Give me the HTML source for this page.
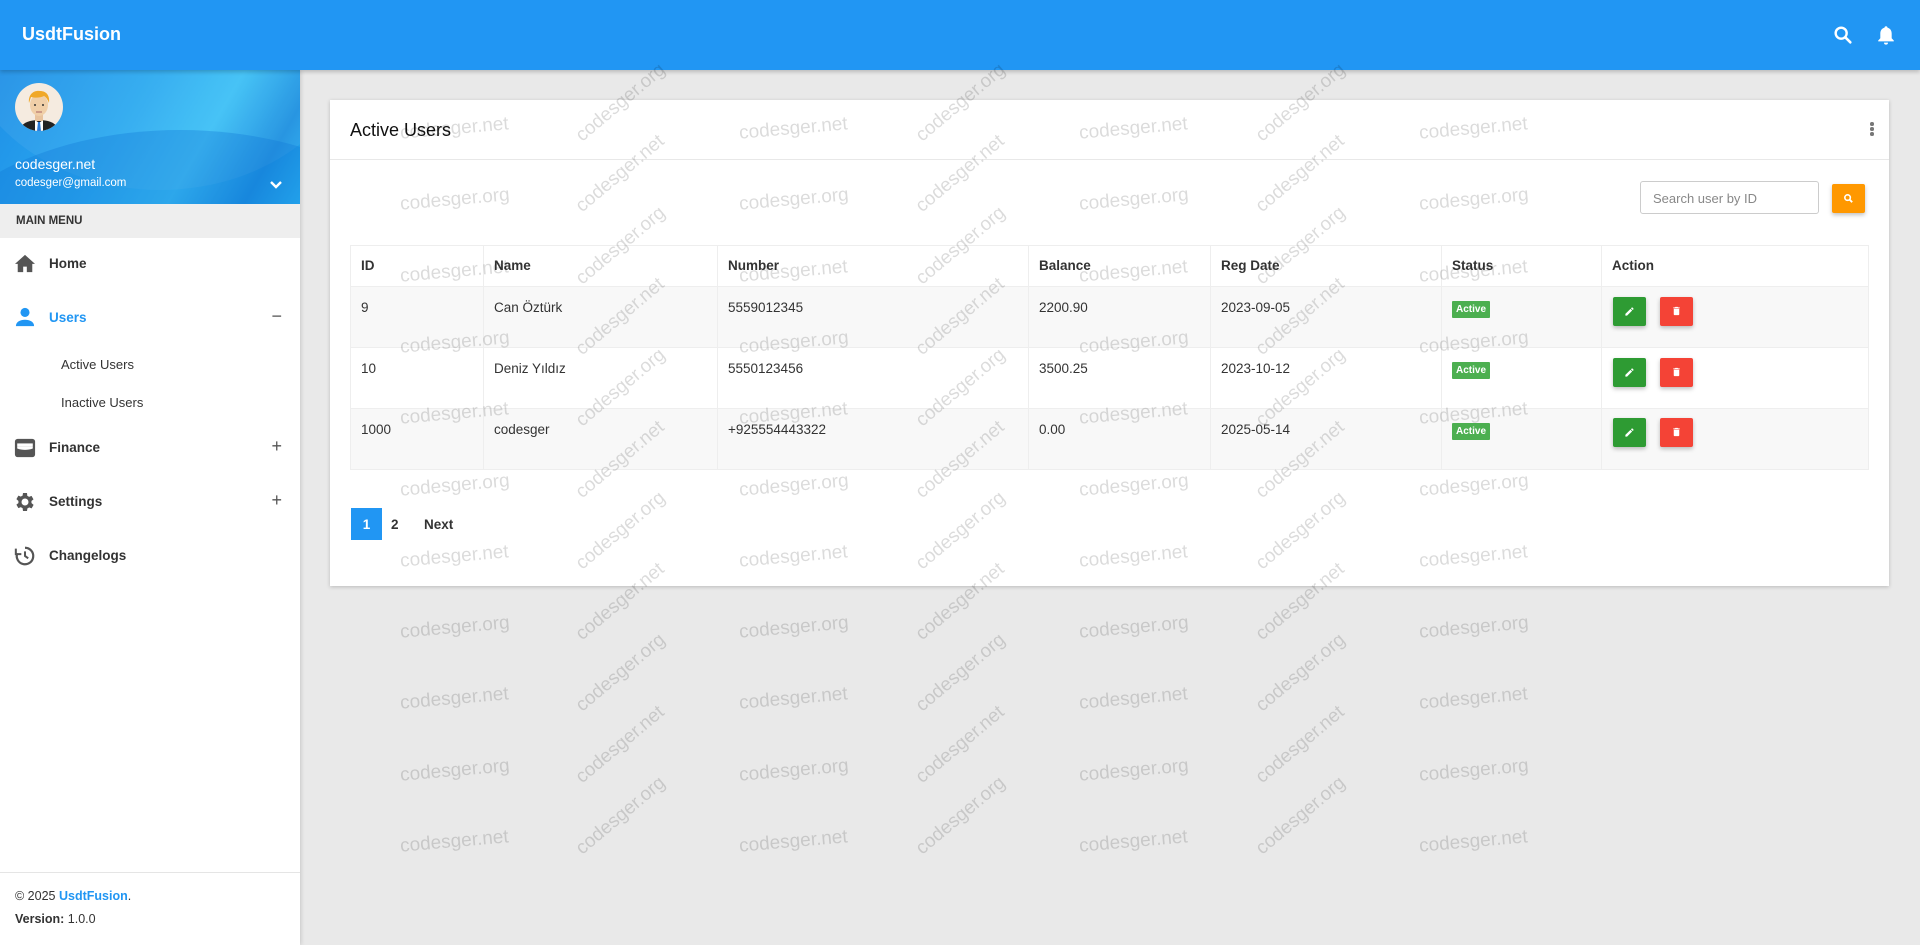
<!DOCTYPE html>
<html><head><meta charset="utf-8"><style>
*{box-sizing:border-box;margin:0;padding:0}
body{width:1920px;height:945px;overflow:hidden;background:#e9e9e9;font-family:"Liberation Sans",sans-serif;color:#333;position:relative}
.top{position:absolute;left:0;top:0;width:1920px;height:70px;background:#2196f3;box-shadow:0 2px 4px rgba(0,0,0,.2);z-index:3}
.top .brand{position:absolute;left:22px;top:24px;color:#fff;font-size:18px;font-weight:bold}
.side{position:absolute;left:0;top:70px;width:300px;height:875px;background:#fff;box-shadow:1px 0 4px rgba(0,0,0,.15);z-index:2}
.prof{position:absolute;left:0;top:0;width:300px;height:134px;overflow:hidden;background:linear-gradient(120deg,#1e8fe6 0%,#2aa8f0 40%,#3cc0f6 65%,#1b8fe0 85%,#2bb6f5 100%)}
.prof .c1{position:absolute;left:-80px;top:60px;width:520px;height:300px;border-radius:50%;background:rgba(16,120,215,.35)}
.prof .c2{position:absolute;left:-40px;top:-200px;width:400px;height:320px;border-radius:50%;background:rgba(255,255,255,.06)}
.av{position:absolute;left:15px;top:13px;width:48px;height:48px;border-radius:50%;background:#f5ebe0;overflow:hidden}
.prof .nm{position:absolute;left:15px;top:86px;color:#fff;font-size:14px}
.prof .em{position:absolute;left:15px;top:107px;color:#fff;font-size:11.5px}
.mm{position:absolute;left:0;top:134px;width:300px;height:34px;background:#eee;font-size:11.5px;font-weight:bold;padding:11px 0 0 16px;color:#333}
.mi{position:absolute;left:0;width:300px;font-size:13.5px;font-weight:bold;color:#333}
.mi svg{position:absolute;left:14px;top:-11px}
.mi span{position:absolute;left:49px;top:-8px}
.mi b{position:absolute;right:18px;top:-12px;font-size:18px;font-weight:normal;color:#555}
.sub{position:absolute;left:61px;font-size:13px;color:#333}
.foot{position:absolute;left:0;top:802px;width:300px;border-top:1px solid #e5e5e5;font-size:12.5px;color:#333}
.card{position:absolute;left:330px;top:100px;width:1559px;height:486px;background:#fff;box-shadow:0 1px 4px rgba(0,0,0,.2);z-index:1}
.card .hd{height:60px;border-bottom:1px solid #e8e8e8;font-size:18px;color:#111;padding:20px 0 0 20px}
.kb{position:absolute;right:15px;top:22px;width:4px}
.kb i{display:block;width:3.5px;height:3.5px;border-radius:50%;background:#777;margin-bottom:1.5px}
.inp{position:absolute;left:1310px;top:81px;width:179px;height:33px;border:1px solid #ccc;border-radius:3px;font-size:13px;color:#888;padding:9px 0 0 12px}
.sb{position:absolute;left:1502px;top:84px;width:33px;height:29px;background:#ff9800;border-radius:2px;box-shadow:0 2px 4px rgba(0,0,0,.25)}
table{position:absolute;left:20px;top:145px;width:1519px;border-collapse:collapse;font-size:13.5px}
td,th{border:1px solid #eee;text-align:left;vertical-align:top;padding:12px 10px 0 10px;color:#333}
th{height:41px;font-weight:bold;color:#333}
td{height:61px;padding-top:13px}
tr.g td{background:#f8f8f8}
.bd{display:inline-block;background:#4caf50;color:#fff;font-size:10px;font-weight:bold;padding:3px 4px;border-radius:1px}
.btn{position:absolute;width:33px;height:29px;border-radius:2px;box-shadow:0 2px 4px rgba(0,0,0,.25)}
.pg{position:absolute;top:408px;height:32px;font-size:13.5px;font-weight:bold;color:#333;padding-top:9px}
.wm{position:absolute;left:0;top:0;width:1920px;height:873px;overflow:hidden;z-index:5;pointer-events:none}
.wm span{position:absolute;font-size:19px;color:rgba(0,0,0,.14);white-space:nowrap;transform-origin:center}
</style></head><body>
<div class="top"><div class="brand">UsdtFusion</div>
<svg style="position:absolute;left:1832px;top:24px" width="22" height="22" viewBox="0 0 24 24"><circle cx="10" cy="10" r="6" fill="none" stroke="#fff" stroke-width="2.6"/><path d="M14.5 14.5L20 20" stroke="#fff" stroke-width="2.8" stroke-linecap="round"/></svg>
<svg style="position:absolute;left:1875px;top:23px" width="22" height="24" viewBox="0 0 24 24"><path d="M12 2.5c1 0 1.6.7 1.6 1.5 3 .8 4.6 3.3 4.6 6.4v5.2L20.5 18v1h-17v-1l2.3-2.4v-5.2c0-3.1 1.6-5.6 4.6-6.4 0-.8.6-1.5 1.6-1.5z" fill="#fff"/><path d="M9.8 20.3h4.4a2.2 2.2 0 0 1-4.4 0z" fill="#fff"/></svg>
</div>
<div class="side">
<div class="prof"><div class="c2"></div><div class="c1"></div>
<div class="av"><svg width="48" height="48" viewBox="0 0 48 48"><path d="M4 48c2-8 10-11 20-11s18 3 20 11z" fill="#222"/><path d="M20 37l4 3 4-3 0 11h-8z" fill="#fff"/><path d="M23 39h2l1 9h-4z" fill="#2a7ad8"/><rect x="20" y="28" width="8" height="10" fill="#e8c39e"/><ellipse cx="24" cy="22" rx="9" ry="11" fill="#f0cfa8"/><path d="M14 20c-1-9 5-13 11-12 6 0 10 4 9 12-1-3-3-6-5-7-4 2-9 2-13 1z" fill="#f0a828"/><circle cx="20" cy="22" r="1" fill="#333"/><circle cx="28" cy="22" r="1" fill="#333"/><path d="M21 29h6" stroke="#a66" stroke-width="1"/></svg></div>
<div class="nm">codesger.net</div><div class="em">codesger@gmail.com</div>
<svg style="position:absolute;left:268px;top:109px" width="16" height="12" viewBox="0 0 16 12"><path d="M3 3l5 5 5-5" fill="none" stroke="#fff" stroke-width="2.4"/></svg>
</div>
<div class="mm">MAIN MENU</div>
<div class="mi" style="top:194px;"><svg width="22" height="20" viewBox="0 0 24 22"><path d="M12 2L1 12h3v9h6v-6h4v6h6v-9h3z" fill="#555"/></svg><span>Home</span></div>
<div class="mi" style="top:248px;color:#2196f3"><svg width="22" height="20" viewBox="0 0 24 22"><circle cx="12" cy="6" r="5" fill="#2196f3"/><path d="M2 21c0-5 5-7 10-7s10 2 10 7z" fill="#2196f3"/></svg><span>Users</span><b>−</b></div>
<div class="sub" style="top:287px">Active Users</div>
<div class="sub" style="top:325px">Inactive Users</div>
<div class="mi" style="top:378px;"><svg width="22" height="22" viewBox="0 0 24 22"><rect x="1" y="1" width="22" height="20" rx="3" fill="#555"/><rect x="3.5" y="6" width="17" height="3.5" fill="#fff"/><path d="M3.5 9.5h17v2c-5 2-12 2-17 0z" fill="#fff"/></svg><span>Finance</span><b>+</b></div>
<div class="mi" style="top:432px;"><svg width="24" height="24" viewBox="0 0 24 24" style="left:13px;top:-12px"><path d="M19.4 13c.1-.3.1-.7.1-1s0-.7-.1-1l2.1-1.6-2-3.5-2.5 1c-.5-.4-1.1-.8-1.7-1L15 3h-4l-.4 2.6c-.6.2-1.2.6-1.7 1l-2.5-1-2 3.5L6.5 11c-.1.3-.1.7-.1 1s0 .7.1 1l-2.1 1.6 2 3.5 2.5-1c.5.4 1.1.8 1.7 1L11 21h4l.4-2.6c.6-.2 1.2-.6 1.7-1l2.5 1 2-3.5zM13 15.5a3.5 3.5 0 1 1 0-7 3.5 3.5 0 0 1 0 7z" fill="#555" transform="translate(-1 0)"/></svg><span>Settings</span><b>+</b></div>
<div class="mi" style="top:486px;"><svg width="22" height="22" viewBox="0 0 24 24"><path d="M12 3a9 9 0 1 1-8.5 6" fill="none" stroke="#555" stroke-width="2.4"/><path d="M2 4v6h6" fill="none" stroke="#555" stroke-width="2.2"/><path d="M12 7v5l3.5 2.5" fill="none" stroke="#555" stroke-width="2.2"/></svg><span>Changelogs</span></div>
<div class="foot"><div style="position:absolute;left:15px;top:16px;white-space:nowrap">© 2025 <span style="color:#2196f3;font-weight:bold">UsdtFusion</span>.</div><div style="position:absolute;left:15px;top:39px;white-space:nowrap"><b>Version:</b> 1.0.0</div></div>
</div>
<div class="card">
<div class="hd">Active Users</div>
<div class="kb"><i></i><i></i><i></i></div>
<div class="inp">Search user by ID</div>
<div class="sb"><svg style="position:absolute;left:11px;top:9px" width="11" height="11" viewBox="0 0 24 24"><circle cx="10" cy="10" r="6" fill="none" stroke="#fff" stroke-width="3.5"/><path d="M14 14l6 6" stroke="#fff" stroke-width="4"/></svg></div>
<table>
<tr><th style="width:133px">ID</th><th style="width:234px">Name</th><th style="width:311px">Number</th><th style="width:182px">Balance</th><th style="width:231px">Reg Date</th><th style="width:160px">Status</th><th>Action</th></tr>
<tr class="g"><td>9</td><td>Can Öztürk</td><td>5559012345</td><td>2200.90</td><td>2023-09-05</td><td><span class="bd">Active</span></td><td></td></tr>
<tr><td>10</td><td>Deniz Yıldız</td><td>5550123456</td><td>3500.25</td><td>2023-10-12</td><td><span class="bd">Active</span></td><td></td></tr>
<tr class="g"><td>1000</td><td>codesger</td><td>+925554443322</td><td>0.00</td><td>2025-05-14</td><td><span class="bd">Active</span></td><td></td></tr>
</table>
<div id="btns"></div>
<div class="pg" style="left:21px;width:31px;background:#2196f3;color:#fff;text-align:center">1</div>
<div class="pg" style="left:61px">2</div>
<div class="pg" style="left:94px">Next</div>
</div>
<div class="wm" id="wm"></div>
<script>
var b=document.getElementById('btns'),h='';
[197,258,318].forEach(function(y){
h+='<div class="btn" style="left:1283px;top:'+y+'px;background:#2e9b33"><svg style="position:absolute;left:11px;top:9px" width="11" height="11" viewBox="0 0 24 24"><path d="M3 17.3V21h3.7L17.8 9.9l-3.7-3.7zM20.7 7c.4-.4.4-1 0-1.4l-2.3-2.3c-.4-.4-1-.4-1.4 0l-1.8 1.8 3.7 3.7z" fill="#fff"/></svg></div>';
h+='<div class="btn" style="left:1330px;top:'+y+'px;background:#f44336"><svg style="position:absolute;left:11px;top:8px" width="11" height="12" viewBox="0 0 24 24"><path d="M6 19c0 1.1.9 2 2 2h8c1.1 0 2-.9 2-2V7H6zM19 4h-3.5l-1-1h-5l-1 1H5v2h14z" fill="#fff"/></svg></div>';});
b.innerHTML=h;
var w=document.getElementById('wm'),s='';
for(var r=0;r<11;r++){var y=118+r*71.3;[400,739,1079,1419].forEach(function(x){s+='<span style="left:'+x+'px;top:'+y+'px;transform:rotate(-5deg)">codesger.'+(r%2?'org':'net')+'</span>';});}
for(var r=0;r<11;r++){var y=92+r*71.3;[566,906,1246].forEach(function(x){s+='<span style="left:'+x+'px;top:'+y+'px;transform:rotate(-40deg)">codesger.'+(r%2?'net':'org')+'</span>';});}
w.innerHTML=s;
</script>
</body></html>
